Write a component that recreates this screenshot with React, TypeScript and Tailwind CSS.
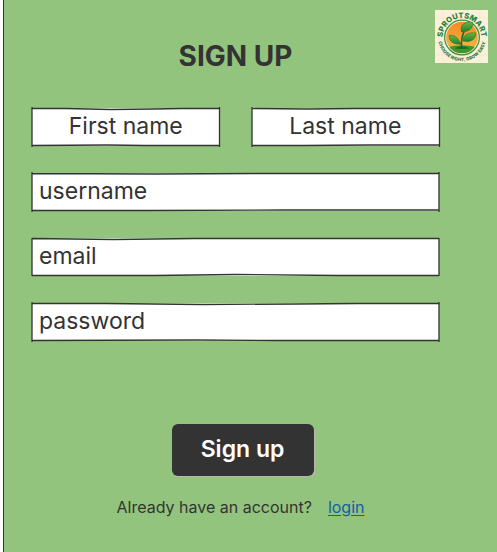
import { useId, type InputHTMLAttributes } from 'react';

type FieldProps = InputHTMLAttributes<HTMLInputElement> & {
  label: string;
  outline: string;
  centered?: boolean;
};

/* Slightly uneven pen strokes, one path per variant of the box outline. */
const OUTLINE_A =
  'M0 0.5 L18 0.5 L42 1.5 L65 1 L80 0.5 L100 0.5 M0 -1 L0 39 M0 37.5 L40 37 L60 37.5 L100 37.5 M100 -1 L100 39';
const OUTLINE_B =
  'M0 0.5 L30 1 L55 0.5 L100 0.5 M0 -1 L0 39 M0 37.5 L28 37.5 L62 37 L100 37 M100 -1 L100 39';
const OUTLINE_C =
  'M0 0.5 L20 1.5 L40 0.5 L100 0.5 M0 0 L0 38 M0 37.5 L30 37.5 L50 36.5 L75 37.5 L100 37.5 M100 0 L100 38';

function Field({ label, outline, centered = false, ...rest }: FieldProps) {
  const id = useId();
  const align = centered ? 'justify-center text-center' : 'justify-start text-left';
  return (
    <div className="relative min-w-0">
      <input
        {...rest}
        id={id}
        placeholder=" "
        className={`peer block h-[38px] w-full bg-white px-[7px] text-[23px] text-[#333] outline-none ${align}`}
      />
      {/* The label sits inside the box until something is typed. */}
      <label
        htmlFor={id}
        className={`absolute inset-0 flex cursor-text items-center px-[7px] pb-[2px] text-[23px] leading-8 peer-[:not(:placeholder-shown)]:hidden ${align}`}
      >
        {label}
      </label>
      <svg
        aria-hidden="true"
        viewBox="0 0 100 38"
        preserveAspectRatio="none"
        className="pointer-events-none absolute inset-0 h-full w-full overflow-visible"
      >
        <path d={outline} fill="none" stroke="#333" strokeWidth="1.3" vectorEffect="non-scaling-stroke" />
      </svg>
    </div>
  );
}

function Logo() {
  return (
    <svg viewBox="0 0 104 104" className="block h-[53px] w-[53px]" role="img" aria-label="SproutSmart">
      <defs>
        <linearGradient id="sun" x1="0" y1="0" x2="0" y2="1">
          <stop offset="0" stopColor="#f28a24" />
          <stop offset="1" stopColor="#fbb84b" />
        </linearGradient>
        <linearGradient id="leaf" x1="0" y1="0" x2="0" y2="1">
          <stop offset="0" stopColor="#6db33a" />
          <stop offset="1" stopColor="#1f8430" />
        </linearGradient>
        <clipPath id="disc">
          <circle cx="53" cy="54" r="31" />
        </clipPath>
        <path id="arcTop" d="M15 54 A38 38 0 0 1 91 54" />
        <path id="arcBottom" d="M7 63 A47 47 0 0 0 99 63" />
      </defs>
      <rect width="104" height="104" fill="#fbf0da" />
      <path
        d="M16 0V104M40 0V104M64 0V104M88 0V104M0 16H104M0 40H104M0 64H104M0 88H104"
        stroke="#f4e3c6"
        strokeWidth="1"
      />
      <circle cx="53" cy="54" r="34" fill="#fbf0da" stroke="#3c9138" strokeWidth="2.5" />
      <circle cx="53" cy="54" r="31" fill="url(#sun)" />
      <g clipPath="url(#disc)">
        <path d="M20 74 Q38 69 53 69 Q68 69 86 74 V90 H20Z" fill="#3f962f" />
        <path d="M38 75 Q53 67 68 75 Q53 78 38 75Z" fill="#17692c" />
      </g>
      <path d="M52 73 Q51 54 57 43" fill="none" stroke="#17692c" strokeWidth="3" />
      <path d="M52 43 C48 28 60 22 74 24 C75 36 67 43 52 43Z" fill="url(#leaf)" stroke="#17692c" strokeWidth="1" />
      <path d="M51 67 C45 51 34 48 28 50 C27 62 37 68 51 67Z" fill="url(#leaf)" stroke="#17692c" strokeWidth="1" />
      <path d="M55 61 C54 48 67 43 80 45 C80 58 70 64 55 61Z" fill="url(#leaf)" stroke="#17692c" strokeWidth="1" />
      <text fill="#27813a" fontFamily="Inter, sans-serif" fontWeight="800" fontSize="15">
        <textPath href="#arcTop" startOffset="50%" textAnchor="middle">
          SPROUTSMART
        </textPath>
      </text>
      <text fill="#347a3d" fontFamily="Inter, sans-serif" fontWeight="800" fontSize="9">
        <textPath href="#arcBottom" startOffset="50%" textAnchor="middle">
          CHOOSE RIGHT, GROW EASY
        </textPath>
      </text>
    </svg>
  );
}

export default function App() {
  return (
    <div className="min-h-screen bg-white pl-[3px] font-['Inter',sans-serif] text-[#333]">
      <main className="min-h-screen border-l border-[#333] bg-[#93c47d] pt-[10px] pb-7">
        <header className="grid grid-cols-[1fr_auto] pr-[9px] pl-8">
          <h1 className="pt-7 text-center text-[28px] leading-9 font-bold">SIGN UP</h1>
          <Logo />
        </header>

        <form className="pt-[34px] pr-[58px] pl-7" onSubmit={(event) => event.preventDefault()}>
          <div className="flex flex-col gap-[27px]">
            <div className="grid grid-cols-2 gap-8">
              <Field label="First name" name="firstName" outline={OUTLINE_A} centered />
              <Field label="Last name" name="lastName" outline={OUTLINE_B} centered />
            </div>
            <Field label="username" name="username" outline={OUTLINE_B} />
            <Field label="email" name="email" type="email" outline={OUTLINE_C} />
            <Field label="password" name="password" type="password" outline={OUTLINE_A} />
          </div>
          <div className="flex justify-center pt-[83px] pl-[14px]">
            <button
              type="submit"
              className="h-[52px] w-[142px] rounded-md bg-[#333] pb-[2px] text-[23px] font-semibold text-white shadow-[1px_1px_0_#b5b5b5]"
            >
              Sign up
            </button>
          </div>
        </form>

        <p className="flex justify-center gap-4 pt-[19px] pr-5 text-base leading-6">
          <span>Already have an account?</span>
          <a href="#login" className="text-[#1160a6] underline underline-offset-2">
            login
          </a>
        </p>
      </main>
    </div>
  );
}
